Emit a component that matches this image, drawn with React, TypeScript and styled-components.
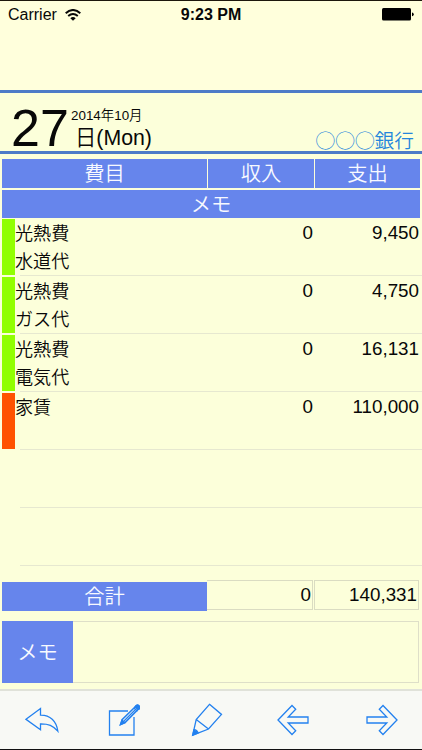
import React from "react";
import styled, { createGlobalStyle } from "styled-components";

const Global = createGlobalStyle`
  * { box-sizing: border-box; }
  body { margin: 0; background: #fcffda; font-family: "Liberation Sans", "Noto Sans CJK JP", sans-serif; color: #080808; }
`;

const Screen = styled.main`
  width: 422px; height: 750px; display: flex; flex-direction: column;
  overflow: hidden; background: #fcffda; border-top: 1px solid #1d170c; border-bottom: 1px solid #111;
  font-weight: 350; white-space: nowrap;
`;
const StatusBar = styled.header`
  height: 89px; flex: none; display: grid; grid-template-columns: 1fr auto 1fr;
  align-items: start; padding: 4px 8px 0; background: #ffffdc;
  font-size: 16px; line-height: 20px; font-weight: 400;
`;
const Carrier = styled.div`display: flex; align-items: center; gap: 8px;`;
const Clock = styled.div`font-weight: 700;`;
const Battery = styled.div`display: flex; justify-content: flex-end; padding-top: 3px;`;

const DateBar = styled.section`
  height: 64px; flex: none; display: flex; align-items: flex-start;
  border-top: 3px solid #4d7bc7; border-bottom: 3px solid #4d7bc7; padding: 0 8px 0 11px;
`;
const Day = styled.div`font-size: 52px; line-height: 60px; padding-top: 5px; width: 60px; font-weight: 400;`;
const DateText = styled.div`display: flex; flex-direction: column; padding-top: 14px; flex: 1;`;
const Month = styled.div`font-size: 13.4px; line-height: 18px;`;
const Weekday = styled.div`font-size: 21.3px; line-height: 26px; padding-left: 4px;`;
const Bank = styled.div`
  color: #2485dc; font-size: 19.7px; line-height: 26px; padding-top: 34px;
  font-family: "Noto Sans CJK JP", sans-serif;
`;

const Heads = styled.div`
  display: grid; grid-template-columns: 205px 106px 105px; column-gap: 1px; row-gap: 2px;
  grid-template-rows: 29px 28px; padding: 5px 2px 0; flex: none;
`;
const Label = styled.div<{ $wide?: boolean }>`
  grid-column: ${(p) => (p.$wide ? "1 / -1" : "auto")};
  display: flex; align-items: center; justify-content: center; background: #6685ec; color: #f7f9ff;
  font-size: 20.3px; line-height: 24px; padding-bottom: 3px; font-family: "Noto Sans CJK JP", sans-serif;
`;
const Rows = styled.div`flex: none; display: flex; flex-direction: column; padding-top: 1px;`;
const Row = styled.div`
  height: 58px; display: grid; grid-template-columns: 13px 1fr 100px 106px; padding: 0 3px 0 2px;
  background: linear-gradient(#e6e8d0, #e6e8d0) 20px 56px / 402px 1px no-repeat;
`;
const Mark = styled.div<{ $color: string }>`height: 56px; background: ${(p) => p.$color};`;
const Names = styled.div`
  font-size: 18.1px; line-height: 28px; margin-top: -1px; font-family: "Noto Sans CJK JP", sans-serif;
`;
const Amount = styled.div`font-size: 18.8px; line-height: 27px; text-align: right; font-weight: 400;`;

const Totals = styled.section`
  display: grid; grid-template-columns: 205px 106px 106px; flex: none; height: 31px; margin: 13px 3px 0 2px; align-items: start;
`;
const TotalLabel = styled(Label)`height: 29px; margin-top: 2px;`;
const TotalCell = styled.div<{ $gap?: boolean }>`
  height: 30px; border: 1px solid #dadcc2; border-left-width: ${(p) => (p.$gap ? "1px" : "0")};
  margin-left: ${(p) => (p.$gap ? "1px" : "0")}; text-align: right; padding-right: 1px;
  font-size: 18.8px; line-height: 28px; font-weight: 400;
`;
const Memo = styled.section`display: flex; height: 62px; flex: none; margin: 10px 3px 0 2px;`;
const MemoLabel = styled(Label)`width: 71px;`;
const MemoField = styled.div`flex: 1; border: 1px solid #dedfc8; border-left: 0;`;
const Toolbar = styled.nav`
  margin-top: 6px; flex: 1; display: grid; grid-template-columns: 83px 81px 86px 85px 94px;
  border-top: 2px solid #e0e2d9; background: #f8f9f5;
`;
const Tool = styled.button`
  border: 0; padding: 0 0 1px; background: none; display: flex; align-items: center; justify-content: center;
  svg { fill: none; stroke: #2381ef; stroke-width: 1.3; display: block; }
`;

const GREEN = "#91ff00";
const entries = [
  { color: GREEN, name: "光熱費", note: "水道代", income: "0", expense: "9,450" },
  { color: GREEN, name: "光熱費", note: "ガス代", income: "0", expense: "4,750" },
  { color: GREEN, name: "光熱費", note: "電気代", income: "0", expense: "16,131" },
  { color: "#ff5200", name: "家賃", note: "", income: "0", expense: "110,000" },
];

export default function App() {
  return (
    <>
      <Global />
      <Screen>
        <StatusBar>
          <Carrier>
            Carrier
            <svg width="16" height="12" viewBox="0 0 16 12" fill="none" stroke="#080808" strokeWidth="1.9">
              <path d="M.7 4.3Q8-2.4 15.3 4.3M3.2 7Q8 2.8 12.8 7" />
              <path d="M5.3 9.2Q8 7 10.7 9.2L8 11.8Z" fill="#080808" stroke="none" />
            </svg>
          </Carrier>
          <Clock>9:23 PM</Clock>
          <Battery>
            <svg width="32" height="13" viewBox="0 0 32 13">
              <rect x="0" y="0" width="29" height="12.5" rx="1.5" fill="#000" />
              <path d="M30 4.5Q31.7 4.5 31.7 6.3T30 8.2Z" fill="#000" />
            </svg>
          </Battery>
        </StatusBar>
        <DateBar>
          <Day>27</Day>
          <DateText>
            <Month>2014年10月</Month>
            <Weekday>日(Mon)</Weekday>
          </DateText>
          <Bank>◯◯◯銀行</Bank>
        </DateBar>
        <Heads>
          <Label>費目</Label>
          <Label>収入</Label>
          <Label>支出</Label>
          <Label $wide>メモ</Label>
        </Heads>
        <Rows>
          {entries.map((e) => (
            <Row key={e.note + e.name}>
              <Mark $color={e.color} />
              <Names>
                <div>{e.name}</div>
                <div>{e.note}</div>
              </Names>
              <Amount>{e.income}</Amount>
              <Amount>{e.expense}</Amount>
            </Row>
          ))}
          <Row />
          <Row />
        </Rows>
        <Totals>
          <TotalLabel>合計</TotalLabel>
          <TotalCell>0</TotalCell>
          <TotalCell $gap>140,331</TotalCell>
        </Totals>
        <Memo>
          <MemoLabel>メモ</MemoLabel>
          <MemoField />
        </Memo>
        <Toolbar>
          <Tool aria-label="Back">
            <svg width="34" height="26" viewBox="0 0 34 26">
              <path d="M1 12.3 15.5 1.5V8.2C25 8 31.5 14 32.8 24.2C28 18.5 23.5 16.7 15.5 16.8V22.7Z" />
            </svg>
          </Tool>
          <Tool aria-label="Edit">
            <svg width="32" height="32" viewBox="0 0 32 32">
              <path d="M20 7H1.5V31H26V13" />
              <path d="M12.5 20.5 14.3 15.5 27 3Q29-.2 31 2T30 5.5L17.3 18.3Z" strokeWidth="1.5" />
              <path d="M26 4 29.5 7.2M15 18 27 6" strokeWidth="1.3" />
              <path d="M12.5 20.5 14 16.2 16.8 18.8ZM27 3Q29-.2 31 2T30 5.5Z" fill="#2381ef" />
            </svg>
          </Tool>
          <Tool aria-label="Marker">
            <svg width="32" height="34" viewBox="0 0 32 34">
              <path d="M18.5 1.3 30.5 11.4 17.5 26 1.7 32.2 5.2 16.5ZM5.2 16.5 17.5 26" />
              <path d="M1.7 32.2 3 26.7Q6 27 7.2 30Z" fill="#2381ef" />
            </svg>
          </Tool>
          <Tool aria-label="Previous">
            <svg width="32" height="32" viewBox="0 0 32 32">
              <path d="M1 16 15 1.5 18.7 5.2 11.2 13H31V19H11.2L18.7 26.8 15 30.5Z" />
            </svg>
          </Tool>
          <Tool aria-label="Next">
            <svg width="32" height="32" viewBox="0 0 32 32">
              <path d="M31 16 17 1.5 13.3 5.2 20.8 13H1V19H20.8L13.3 26.8 17 30.5Z" />
            </svg>
          </Tool>
        </Toolbar>
      </Screen>
    </>
  );
}
